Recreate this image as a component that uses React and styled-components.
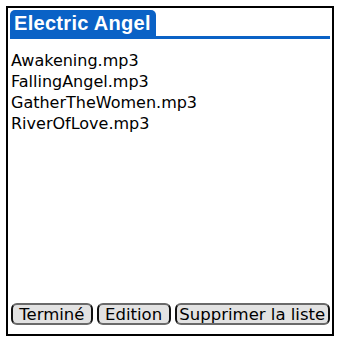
import styled, { createGlobalStyle } from "styled-components";

const GlobalStyle = createGlobalStyle`
  html, body {
    margin: 0;
    padding: 0;
    background: #fff;
  }
  body {
    font-family: "DejaVu Sans", "Liberation Sans", sans-serif;
  }
`;

const Screen = styled.div`
  width: 337px;
  height: 340px;
  box-sizing: border-box;
  padding: 6px 3px 4px 6px;
`;

const Frame = styled.div`
  height: 100%;
  box-sizing: border-box;
  border: 2px solid #000;
  padding: 2px 2px 9px 2px;
  display: flex;
  flex-direction: column;
`;

const TitleBar = styled.div`
  display: flex;
  border-bottom: 3px solid #0a62c6;
`;

const TitleTab = styled.div`
  background: #0a62c6;
  color: #fff;
  font-family: "Liberation Sans", "DejaVu Sans", sans-serif;
  font-weight: bold;
  font-size: 20px;
  line-height: 26px;
  padding: 0 5px 0 4px;
  border-radius: 5px 5px 0 0;
  letter-spacing: 0.3px;
`;

const List = styled.ul`
  list-style: none;
  margin: 11px 0 0;
  padding: 0;
  flex: 1;
`;

const Item = styled.li`
  font-size: 16px;
  line-height: 21px;
  color: #000;
  padding-left: 1px;
`;

const Buttons = styled.div`
  display: flex;
  gap: 4px;
  padding-left: 1px;
`;

const Button = styled.button`
  width: ${(p) => p.$w}px;
  font-family: inherit;
  font-size: 16.5px;
  line-height: 17px;
  height: 22px;
  padding: 0;
  text-align: center;
  background: #e2e2e2;
  color: #000;
  border: 2px solid #6a6a6a;
  border-left-color: #111;
  border-right-color: #111;
  border-radius: 6px;
`;

export default function App() {
  const tracks = [
    "Awakening.mp3",
    "FallingAngel.mp3",
    "GatherTheWomen.mp3",
    "RiverOfLove.mp3",
  ];
  return (
    <>
      <GlobalStyle />
      <Screen>
        <Frame>
          <TitleBar>
            <TitleTab>Electric Angel</TitleTab>
          </TitleBar>
          <List>
            {tracks.map((t) => (
              <Item key={t}>{t}</Item>
            ))}
          </List>
          <Buttons>
            <Button $w={82}>Terminé</Button>
            <Button $w={74}>Edition</Button>
            <Button $w={156}>Supprimer la liste</Button>
          </Buttons>
        </Frame>
      </Screen>
    </>
  );
}
